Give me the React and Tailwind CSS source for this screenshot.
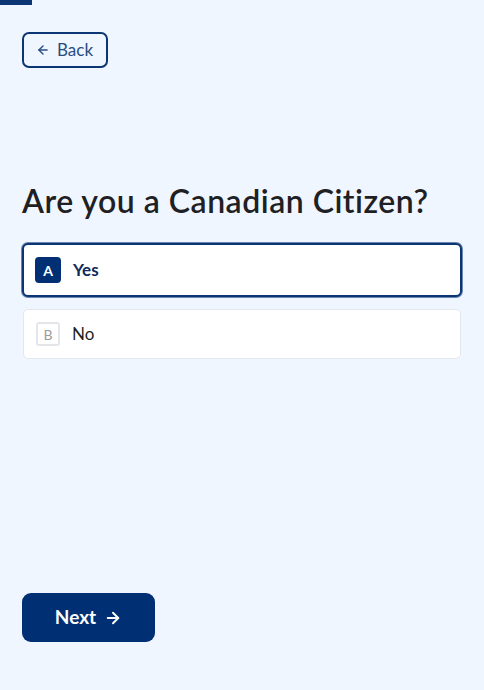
import React, { useState } from "react";

const options = [
  { key: "A", label: "Yes" },
  { key: "B", label: "No" },
];

const App = () => {
  const [selected, setSelected] = useState("A");

  return (
    <div
      className="min-h-screen h-[690px] bg-[#eff6ff] flex flex-col"
      style={{ fontFamily: "Lato, 'Noto Sans', sans-serif" }}
    >
      {/* Progress bar */}
      <div className="h-[5px] w-full">
        <div className="h-full w-[32px] bg-[#0b3573]" />
      </div>

      <div className="flex flex-col flex-1 px-[22px] pt-[27px] pb-[48px]">
        <div>
          <button className="flex items-center gap-[7px] h-[36px] pl-[12px] pr-[13px] border-2 border-[#0b3573] rounded-[7px] text-[17px] text-[#2b4c82]">
            <svg width="14" height="14" viewBox="0 0 24 24" fill="none" stroke="currentColor" strokeWidth="2.4" strokeLinecap="round" strokeLinejoin="round">
              <path d="M19 12H5" />
              <path d="M12 19l-7-7 7-7" />
            </svg>
            Back
          </button>
        </div>

        <h1 className="mt-[113px] text-[32px] font-semibold text-[#1f1f24] leading-[40px] tracking-[0.5px]">
          Are you a Canadian Citizen?
        </h1>

        <div className="mt-[22px] flex flex-col gap-[12px]">
          {options.map((opt) => {
            const active = selected === opt.key;
            return (
              <button
                key={opt.key}
                onClick={() => setSelected(opt.key)}
                className={
                  active
                    ? "flex items-center gap-[12px] h-[54px] px-[11px] bg-white rounded-[6px] border-2 border-[#0b3573] ring-1 ring-[#6b86b0] text-left"
                    : "flex items-center gap-[12px] h-[50px] px-[12px] mx-[1px] bg-white rounded-[5px] border border-[#e3e8ef] text-left"
                }
              >
                <span
                  className={
                    active
                      ? "w-[26px] h-[26px] rounded-[4px] bg-[#003073] text-white text-[14px] font-bold flex items-center justify-center"
                      : "w-[24px] h-[24px] rounded-[3px] border-2 border-[#e3e5e8] text-[#9a9ca0] text-[14px] flex items-center justify-center"
                  }
                >
                  {opt.key}
                </span>
                <span
                  className={
                    active
                      ? "text-[17px] font-bold text-[#0f2a58]"
                      : "text-[17px] text-[#1f1f24]"
                  }
                >
                  {opt.label}
                </span>
              </button>
            );
          })}
        </div>

        <div className="flex-1" />

        <div>
          <button className="flex items-center justify-center gap-[8px] w-[133px] h-[49px] bg-[#003073] rounded-[9px] text-white text-[19px] font-bold">
            Next
            <svg width="18" height="18" viewBox="0 0 24 24" fill="none" stroke="currentColor" strokeWidth="2.6" strokeLinecap="round" strokeLinejoin="round">
              <path d="M5 12h14" />
              <path d="M12 5l7 7-7 7" />
            </svg>
          </button>
        </div>
      </div>
    </div>
  );
};

export default App;
